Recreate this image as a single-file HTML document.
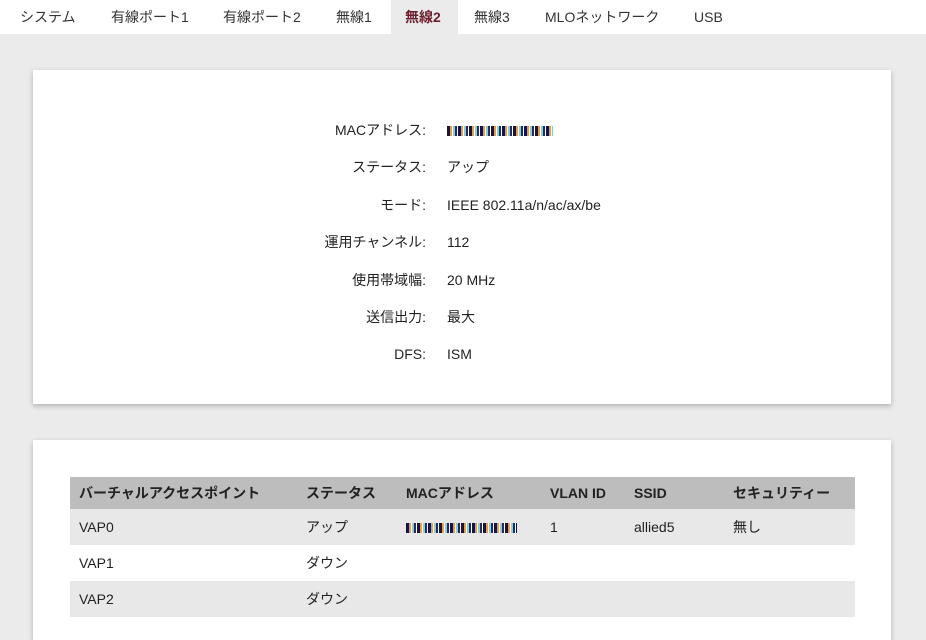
<!DOCTYPE html>
<html><head><meta charset="utf-8"><style>
*{margin:0;padding:0;box-sizing:border-box}
html,body{width:926px;height:612px;overflow:hidden}
body{background:#ebebeb;font-family:"Liberation Sans","Noto Sans CJK JP",sans-serif;font-size:14px;color:#222}
.tabs{height:34px;background:#fff;position:relative}
.tab{position:absolute;top:0;height:34px;line-height:34px;font-size:14px;color:#333}
.tab.on{background:#ebebeb;color:#6b1f2e;font-weight:bold}
.card{position:absolute;left:33px;width:858px;background:#fff;box-shadow:0 2px 5px rgba(0,0,0,.25)}
.row{position:absolute;left:0;width:100%;height:20px;line-height:20px}
.row .l{position:absolute;right:465px;text-align:right;white-space:nowrap}
.row .v{position:absolute;left:414px;white-space:nowrap}
.mac{display:inline-block;height:10px;vertical-align:middle;background:repeating-linear-gradient(90deg,#1a1440 0 3px,#e0a050 3px 5px,#fff 5px 6px,#88ccdd 6px 8px,#2a2a60 8px 10px,#fff 10px 11px)}
table{position:absolute;left:37px;top:37px;width:785px;border-collapse:collapse}
th{background:#bdbdbd;height:32px;text-align:left;font-size:14px;font-weight:bold;padding-left:9px}
td{height:36px;padding-left:9px;font-size:14px}
tr.g td{background:#e8e8e8}
</style></head><body>
<div class="tabs">
<div class="tab" style="left:20px">システム</div>
<div class="tab" style="left:111px">有線ポート1</div>
<div class="tab" style="left:223px">有線ポート2</div>
<div class="tab" style="left:336px">無線1</div>
<div class="tab on" style="left:391px;width:67px;padding-left:14px">無線2</div>
<div class="tab" style="left:474px">無線3</div>
<div class="tab" style="left:545px">MLOネットワーク</div>
<div class="tab" style="left:694px">USB</div>
</div>
<div class="card" style="top:70px;height:334px">
<div class="row" style="top:50px"><span class="l">MACアドレス:</span><span class="v"><span class="mac" style="width:106px"></span></span></div>
<div class="row" style="top:87px"><span class="l">ステータス:</span><span class="v">アップ</span></div>
<div class="row" style="top:125px"><span class="l">モード:</span><span class="v">IEEE 802.11a/n/ac/ax/be</span></div>
<div class="row" style="top:162px"><span class="l">運用チャンネル:</span><span class="v">112</span></div>
<div class="row" style="top:200px"><span class="l">使用帯域幅:</span><span class="v">20 MHz</span></div>
<div class="row" style="top:237px"><span class="l">送信出力:</span><span class="v">最大</span></div>
<div class="row" style="top:274px"><span class="l">DFS:</span><span class="v">ISM</span></div>
</div>
<div class="card" style="top:440px;height:200px">
<table>
<tr><th style="width:227px">バーチャルアクセスポイント</th><th style="width:100px">ステータス</th><th style="width:144px">MACアドレス</th><th style="width:84px">VLAN ID</th><th style="width:99px">SSID</th><th>セキュリティー</th></tr>
<tr class="g"><td>VAP0</td><td>アップ</td><td><span class="mac" style="width:111px"></span></td><td>1</td><td>allied5</td><td>無し</td></tr>
<tr><td>VAP1</td><td>ダウン</td><td></td><td></td><td></td><td></td></tr>
<tr class="g"><td>VAP2</td><td>ダウン</td><td></td><td></td><td></td><td></td></tr>
</table>
</div>
</body></html>
